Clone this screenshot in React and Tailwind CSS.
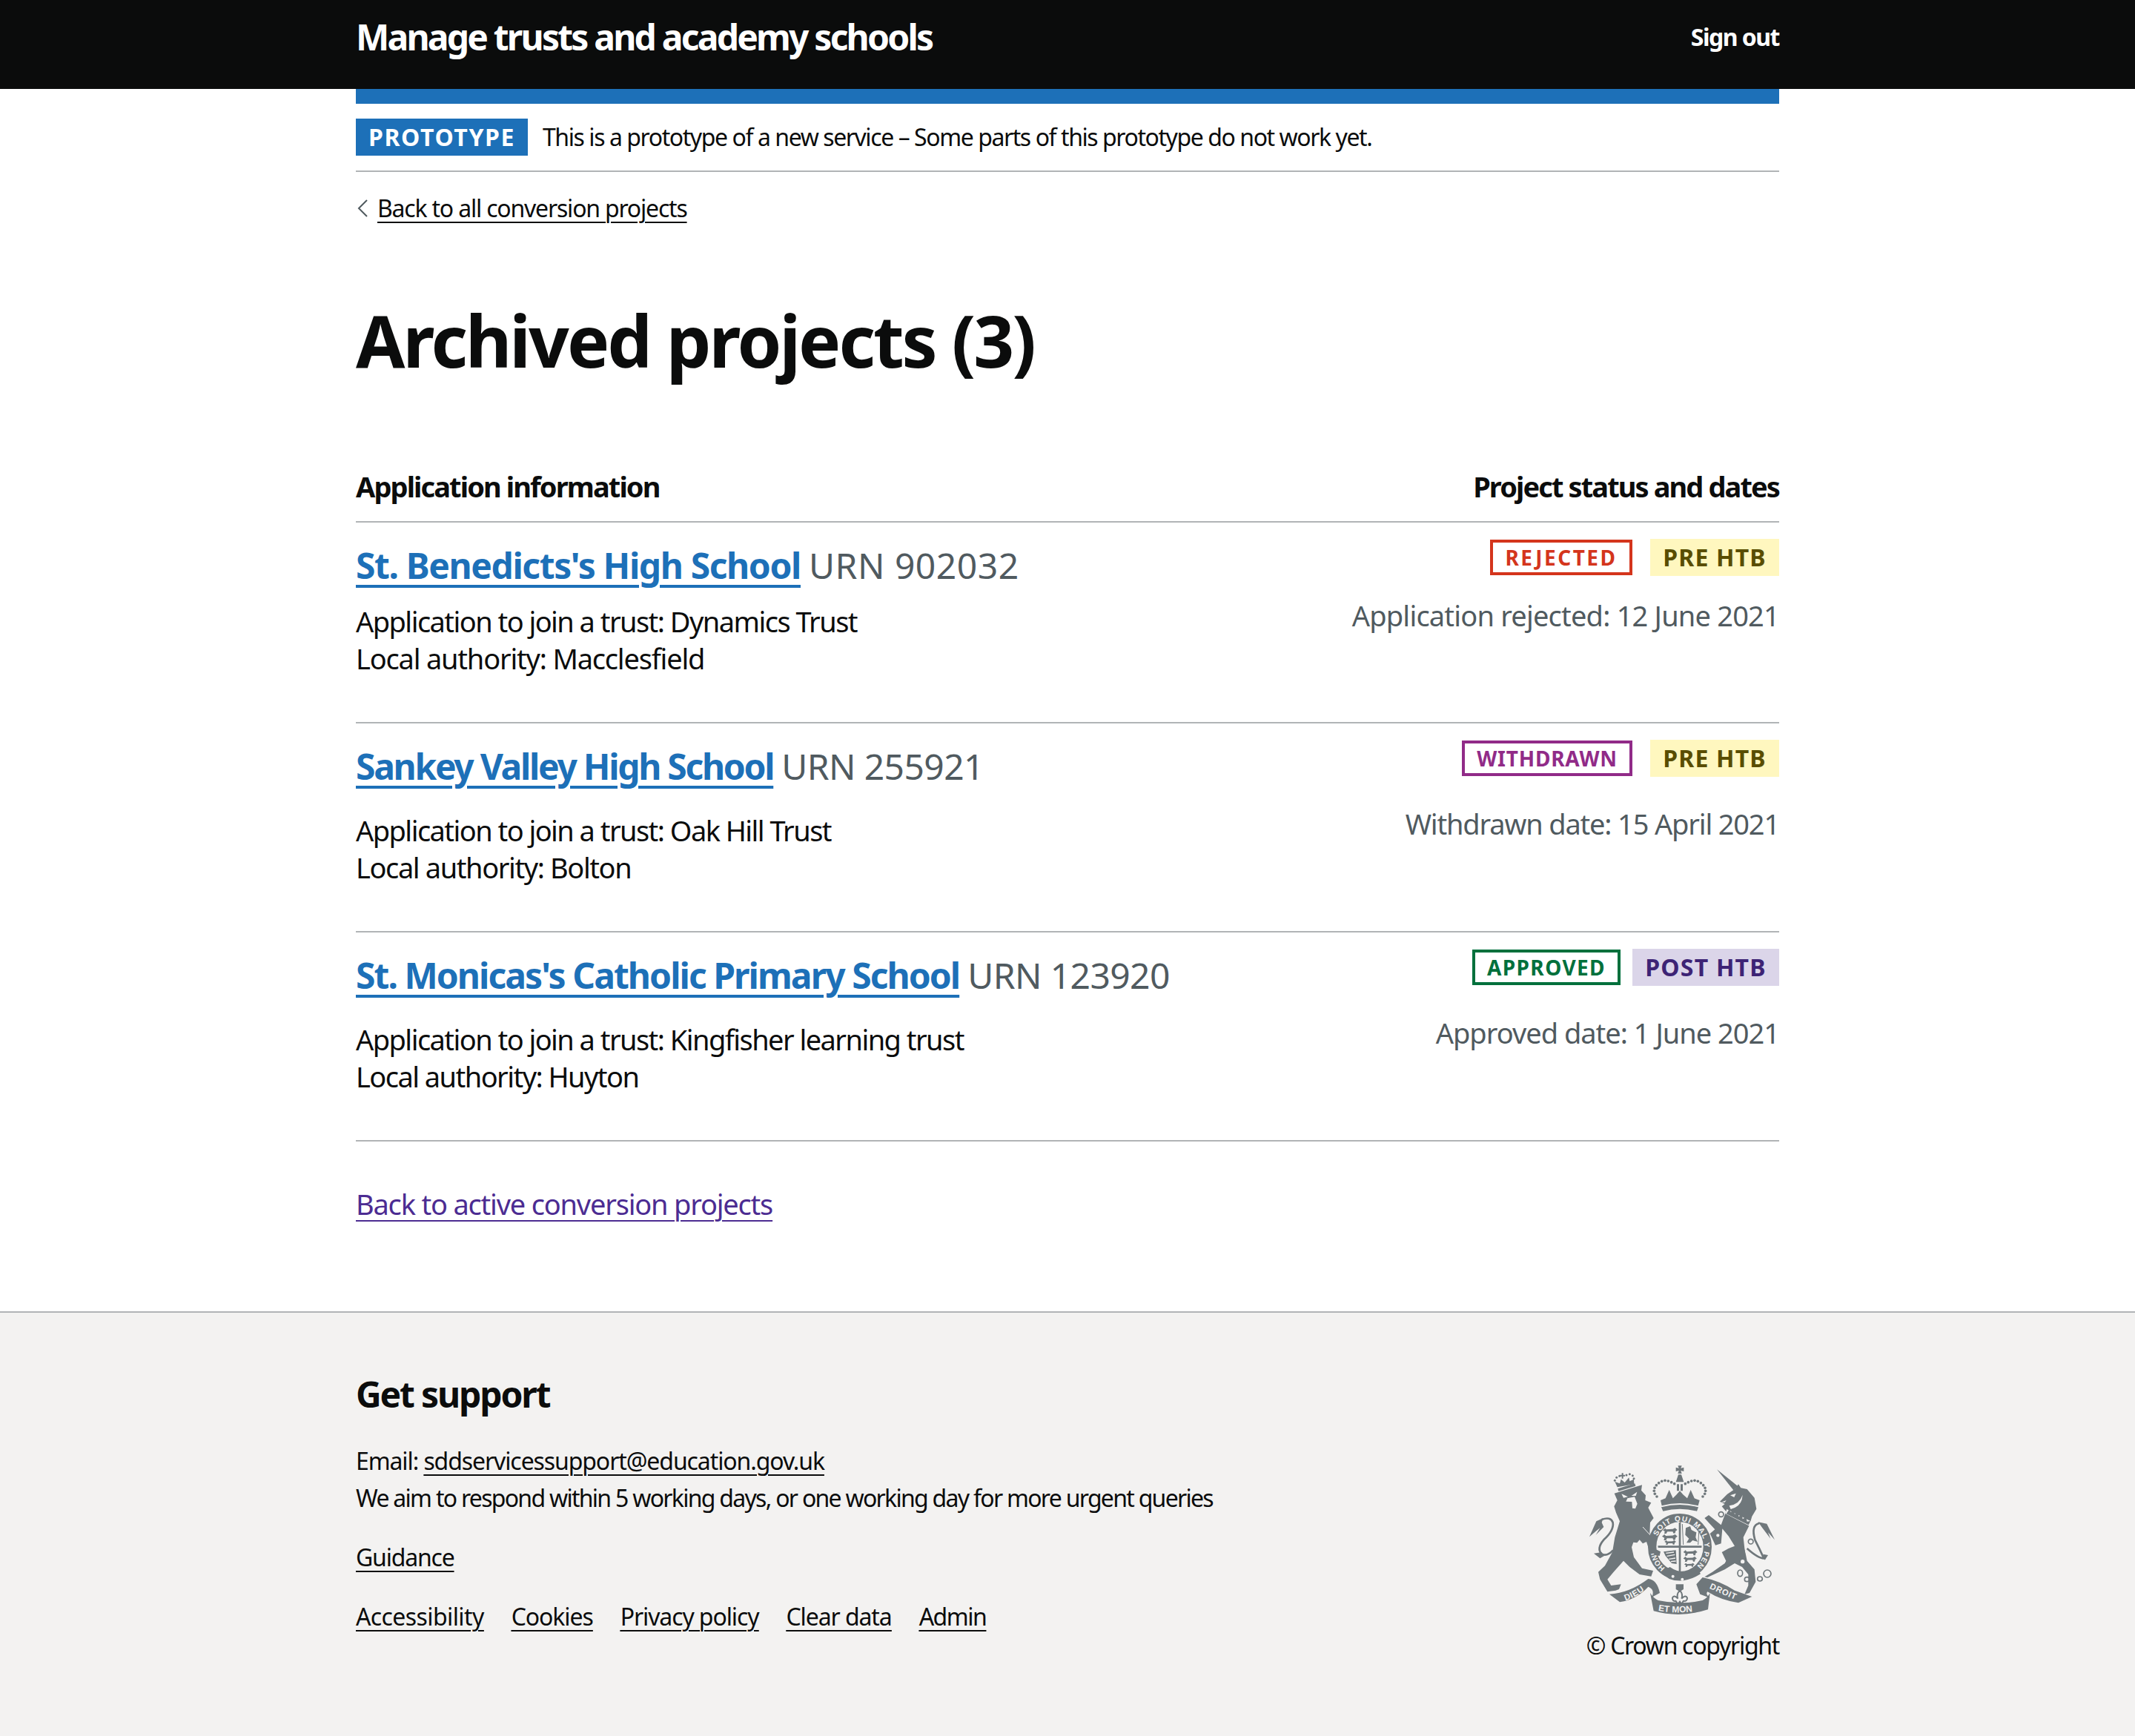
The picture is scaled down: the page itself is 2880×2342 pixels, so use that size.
import React from 'react';

const rows = [
  {
    name: "St. Benedicts's High School",
    nameClass: 'tracking-[-1.4px]',
    urn: 'URN 902032',
    urnClass: 'tracking-[0.5px]',
    trust: 'Dynamics Trust',
    authority: 'Macclesfield',
    authorityClass: 'tracking-[-1.2px]',
    status: 'REJECTED',
    statusClass: 'w-[192px] border-[#d4351c] tracking-[2.5px] text-[#d4351c]',
    phase: 'PRE HTB',
    phaseClass: 'ml-[24px] w-[174px] bg-[#fff7bf] text-[#594d00]',
    date: 'Application rejected: 12 June 2021',
    rowClass: 'h-[271px]',
    infoClass: 'mt-[20px]',
    dateClass: 'mt-[28px] tracking-[-0.8px]',
  },
  {
    name: 'Sankey Valley High School',
    nameClass: 'tracking-[-2.3px]',
    urn: 'URN 255921',
    urnClass: 'tracking-[-0.6px]',
    trust: 'Oak Hill Trust',
    authority: 'Bolton',
    authorityClass: 'tracking-[-1.4px]',
    status: 'WITHDRAWN',
    statusClass: 'w-[230px] border-[#912b88] tracking-[0.8px] text-[#912b88]',
    phase: 'PRE HTB',
    phaseClass: 'ml-[24px] w-[174px] bg-[#fff7bf] text-[#594d00]',
    date: 'Withdrawn date: 15 April 2021',
    rowClass: 'h-[282px]',
    infoClass: 'mt-[31px]',
    dateClass: 'mt-[38px] tracking-[-1.17px]',
  },
  {
    name: "St. Monicas's Catholic Primary School",
    nameClass: 'tracking-[-1.95px]',
    urn: 'URN 123920',
    urnClass: 'tracking-[-0.6px]',
    trust: 'Kingfisher learning trust',
    authority: 'Huyton',
    authorityClass: 'tracking-[-1.55px]',
    status: 'APPROVED',
    statusClass: 'w-[200px] border-[#00703c] tracking-[1.4px] text-[#00703c]',
    phase: 'POST HTB',
    phaseClass: 'ml-[16px] w-[198px] bg-[#dbd5e9] text-[#3d2375]',
    date: 'Approved date: 1 June 2021',
    rowClass: 'h-[282px]',
    infoClass: 'mt-[31px]',
    dateClass: 'mt-[38px] tracking-[-1px]',
  },
];

const paper = '#f3f2f1';
const ink = '#6f777b';
const heraldicLion = 'M0 7L8 0L13 5L36 4L44 0L52 7L46 11L44 19L38 19L36 13L17 13L13 20L6 20L8 12Z';
const crownBeads = [[285, 135], [277, 124], [274, 112], [276, 100], [283, 89], [293, 80], [305, 73], [318, 70], [331, 72], [344, 77], [356, 83], [400, 83], [412, 77], [425, 72], [438, 70], [451, 73], [463, 80], [473, 89], [480, 100], [482, 112], [479, 124], [471, 135]];

const Crest = () => (
  <svg viewBox="0 0 765 630" className="mr-[5px] block h-[210px] w-[255px]" fill={ink}>
    {/* lion */}
    <path d="M108 352Q85 378 62 368Q40 345 70 310Q112 272 107 240Q98 215 62 228" fill="none" stroke={ink} strokeWidth="8" />
    <path d="M68 222L40 235L12 298L38 275L55 262L38 290L70 258L62 240Z" />
    <path d="M30 365L62 360L72 375L55 385Z" />
    <path d="M113 122L225 88L222 110L240 130L238 150L262 160L250 180L272 222L258 240L256 285L278 340L300 358L296 375L278 372L262 355L250 340L243 318L228 325L215 310L205 322L190 320L183 340L192 380L225 425L270 435L262 458L215 450L175 420L150 395L110 440L85 470L100 495L140 490L132 510L118 515L85 520L55 470L48 440L75 415L105 360L115 300L135 235L120 200L112 175L125 150Z" />
    <path d="M228 258L262 295" stroke={paper} strokeWidth="3" fill="none" />
    <path d="M142 124L168 136L150 140ZM205 116L182 132L200 132ZM166 142L195 136L206 164L198 184L186 182L184 156L160 155Z" fill={paper} />
    {/* lion crown */}
    <path d="M125 97L115 75L135 82L140 65L155 78L172 58L175 73L192 65L193 85Z" />
    <path d="M127 103L196 82L199 92L130 113Z" />
    <path d="M143 40H149V47H156V53H149V62H143V53H136V47H143Z" />
    {[[115, 70], [122, 58], [134, 52], [162, 48], [175, 44], [187, 50], [192, 62]].map(([x, y]) => (
      <circle key={`${x}-${y}`} cx={x} cy={y} r="4.5" />
    ))}

    {/* main crown */}
    <path d="M370 10H386L382 20L394 17V33L382 30L386 42H370L374 30L362 33V17L374 20Z" />
    <path d="M372 46H384L394 76H362Z" />
    <path d="M366 85H375V112H366ZM381 85H390V112H381Z" />
    {crownBeads.map(([x, y]) => (
      <circle key={`${x}-${y}`} cx={x} cy={y} r="5.5" />
    ))}
    <path d="M300 150L320 142L335 108L350 142L365 127L378 112L391 127L408 142L422 108L437 142L458 150L452 172Q378 152 305 172Z" />
    <path d="M303 178Q378 158 453 178L447 194Q378 176 310 194Z" />

    {/* garter and shield */}
    <ellipse cx="378" cy="338" rx="112" ry="117" fill={paper} stroke={ink} strokeWidth="34" />
    <clipPath id="shieldClip">
      <path d="M290 290Q330 245 378 236Q426 245 466 290Q472 350 452 395Q420 440 378 452Q336 440 304 395Q284 350 290 290Z" />
    </clipPath>
    <g clipPath="url(#shieldClip)">
      <path transform="translate(308 262) scale(1.15)" d={heraldicLion} />
      <path transform="translate(306 288) scale(1.2)" d={heraldicLion} />
      <path transform="translate(316 312) scale(.9)" d={heraldicLion} />
      <path transform="translate(392 352) scale(1.1)" d={heraldicLion} />
      <path transform="translate(392 378) scale(1.05)" d={heraldicLion} />
      <path transform="translate(396 404) scale(.8)" d={heraldicLion} />
      <path d="M402 262L420 255L425 270L445 280L442 300L450 318L430 312L420 322L405 322L415 305L400 290Z" />
      <path d="M388 246L392 330M456 262L452 330" stroke={ink} strokeWidth="3" fill="none" />
      <path d="M312 358L362 352L365 408L345 405L320 375Z" />
      <path d="M322 364L354 360M326 376L358 370M334 388L360 384M342 398L362 396" stroke={paper} strokeWidth="4" fill="none" />
      <path d="M374 230H382V455H374ZM285 334H475V342H285Z" />
    </g>
    <path id="garterTop" d="M287 296A100 105 0 1 1 440 422" fill="none" />
    <path id="garterLeft" d="M318 424A100 105 0 0 1 281 362" fill="none" />
    <text fontFamily="'Liberation Sans',sans-serif" fontSize="30" fontWeight="700" letterSpacing="3.5" fill={paper}>
      <textPath href="#garterTop">SOIT QUI MAL Y PENSE</textPath>
    </text>
    <text fontFamily="'Liberation Sans',sans-serif" fontSize="30" fontWeight="700" fill={paper}>
      <textPath href="#garterLeft">HONI</textPath>
    </text>
    <path d="M262 345L285 350L300 358L296 375L278 372L262 355Z" />

    {/* buckle */}
    <path d="M322 428L338 420Q380 452 452 432L462 448Q395 490 335 468L316 452Z" />
    <circle cx="350" cy="458" r="6" fill={paper} />
    <circle cx="388" cy="470" r="6" fill={paper} />

    {/* ribbon */}
    <path d="M93 530Q175 525 250 468Q285 470 297 525L265 542Q278 510 250 500Q205 550 135 562Z" />
    <path d="M445 490L470 462Q540 476 600 515L670 540L615 565Q545 555 490 520Q480 530 500 545L460 530Z" />
    <path d="M258 525Q270 545 290 555Q380 575 470 555Q490 545 500 525L492 592Q380 628 272 598Z" />
    <path d="M362 490H393V510L378 520L362 510Z" />
    <path d="M378 515Q392 530 385 548Q402 530 408 545Q408 560 392 558L385 570L378 560L370 570L362 558Q348 560 348 545Q354 530 370 548Q363 530 378 515Z" fill="none" stroke={ink} strokeWidth="6" />
    <path id="ribbonLeft" d="M158 556Q210 538 258 496" fill="none" />
    <path id="ribbonRight" d="M497 506Q550 530 612 557" fill="none" />
    <path id="ribbonMid" d="M290 597Q378 612 468 594" fill="none" />
    <g fontFamily="'Liberation Sans',sans-serif" fontWeight="700" fill={paper}>
      <text fontSize="34" letterSpacing="2"><textPath href="#ribbonLeft">DIEU</textPath></text>
      <text fontSize="34" letterSpacing="2"><textPath href="#ribbonRight">DROIT</textPath></text>
      <text fontSize="36"><textPath href="#ribbonMid">ET MON</textPath></text>
    </g>

    {/* unicorn */}
    <path d="M528 25L596 110L612 92Z" />
    <path d="M540 155L570 125L600 105L615 85L625 100L650 105L680 140L688 185L670 215L660 250L635 300L640 345L650 395L680 430L685 480L660 525L640 530L655 495L655 450L630 420L600 405L560 430L490 462L478 460L510 440L560 405L565 395L548 360L575 345L600 335L575 295L550 265L545 325L522 332L500 285L520 268L478 222L495 210L545 250L565 195L548 175L560 165Z" />
    <path d="M568 186L668 236L660 254L562 204Z" fill={paper} />
    <path d="M572 196L578 186L584 198L596 190L600 206L614 198L616 216L630 208L632 226L646 218L650 236L664 234L656 250L566 205Z" />
    <path d="M582 130L605 122L598 138Z" fill={paper} />
    <path d="M578 172Q620 165 632 128Q630 175 584 186Z" fill={paper} />
    <path d="M545 158L566 150L560 158Z" fill={paper} />
    <circle cx="545" cy="207" r="10" fill="none" stroke={ink} strokeWidth="5" />
    <circle cx="532" cy="292" r="9" fill={paper} stroke={ink} strokeWidth="5" />
    <circle cx="665" cy="317" r="10" fill="none" stroke={ink} strokeWidth="5" />
    <circle cx="650" cy="358" r="7" fill={paper} />
    <circle cx="632" cy="398" r="8" fill={paper} />
    <ellipse cx="622" cy="445" rx="10" ry="13" fill="none" stroke={ink} strokeWidth="5" />
    <ellipse cx="650" cy="470" rx="10" ry="9" fill="none" stroke={ink} strokeWidth="5" />
    <ellipse cx="702" cy="468" rx="10" ry="9" fill="none" stroke={ink} strokeWidth="5" />
    <circle cx="732" cy="447" r="15" fill="none" stroke={ink} strokeWidth="5" />
    <path d="M650 345Q695 385 718 385Q700 345 682 310Q665 250 700 243" fill="none" stroke={ink} strokeWidth="8" />
    <path d="M695 238L730 245L762 310L735 280L745 305L712 262Z" />
    <path d="M715 368L735 372L722 392Z" />
  </svg>
);

const App = () => {
  return (
    <div className="flex min-h-[2342px] flex-col bg-white font-['Noto_Sans',sans-serif] text-[#0b0c0c]">
      <header className="h-[120px] bg-[#0b0c0c] text-white">
        <div className="mx-auto flex h-[100px] w-[1920px] items-center justify-between">
          <span className="text-[48px] font-bold tracking-[-2.8px]">Manage trusts and academy schools</span>
          <span className="text-[32px] font-bold tracking-[-1.5px]">Sign out</span>
        </div>
      </header>

      <main className="mx-auto w-[1920px]">
        <div className="h-[20px] bg-[#1d70b8]"></div>
        <div className="flex items-center border-b-2 border-[#b1b4b6] py-[20px]">
          <span className="flex h-[50px] w-[232px] items-center justify-center bg-[#1d70b8] text-[32px] font-bold tracking-[1.6px] text-white">PROTOTYPE</span>
          <span className="ml-[20px] text-[32px] tracking-[-1.43px]">This is a prototype of a new service – Some parts of this prototype do not work yet.</span>
        </div>

        <div className="mt-[27px] flex h-[44px] items-center">
          <svg viewBox="0 0 14 24" className="ml-[2px] h-[24px] w-[14px]" fill="none" stroke="#505a5f" strokeWidth="2">
            <path d="M13 1L2 12L13 23" />
          </svg>
          <a className="ml-[13px] text-[32px] tracking-[-1.2px] underline underline-offset-[6px] decoration-2">Back to all conversion projects</a>
        </div>

        <h1 className="mt-[96px] text-[96px] leading-[120px] font-bold tracking-[-3px]">Archived projects (3)</h1>

        <div className="mt-[112px] flex h-[74px] items-start justify-between border-b-2 border-[#b1b4b6] text-[38px] leading-[50px] font-bold tracking-[-1.9px]">
          <span>Application information</span>
          <span>Project status and dates</span>
        </div>

        {rows.map((row) => (
          <div key={row.urn} className={`flex justify-between border-b-2 border-[#b1b4b6] ${row.rowClass}`}>
            <div className="pt-[28px]">
              <div className="text-[48px] leading-[60px]">
                <a className={`font-bold text-[#1d70b8] underline underline-offset-[8px] decoration-[4px] ${row.nameClass}`}>{row.name}</a>
                <span className={`ml-[11px] text-[#505a5f] ${row.urnClass}`}>{row.urn}</span>
              </div>
              <p className={`text-[38px] leading-[50px] tracking-[-1.55px] ${row.infoClass}`}>Application to join a trust: {row.trust}</p>
              <p className={`text-[38px] leading-[50px] ${row.authorityClass}`}>Local authority: {row.authority}</p>
            </div>
            <div className="flex flex-col items-end pt-[22px]">
              <div className="flex items-center">
                <span className={`flex h-[48px] items-center justify-center border-4 text-[28px] font-bold ${row.statusClass}`}>{row.status}</span>
                <span className={`flex h-[50px] items-center justify-center text-[32px] font-bold tracking-[1.2px] ${row.phaseClass}`}>{row.phase}</span>
              </div>
              <p className={`text-[38px] leading-[50px] text-[#505a5f] ${row.dateClass}`}>{row.date}</p>
            </div>
          </div>
        ))}

        <a className="mt-[59px] mb-[120px] block text-[38px] leading-[50px] tracking-[-1.2px] text-[#4c2c92] underline underline-offset-[7px] decoration-2">Back to active conversion projects</a>
      </main>

      <footer className="flex-1 border-t-2 border-[#b1b4b6] bg-[#f3f2f1]">
        <div className="mx-auto flex w-[1920px] justify-between">
          <div className="pt-[80px]">
            <h2 className="text-[48px] leading-[60px] font-bold tracking-[-2.15px]">Get support</h2>
            <p className="mt-[35px] text-[32px] leading-[50px] tracking-[-1.1px]">
              Email: <a className="underline underline-offset-[6px] decoration-2">sddservicessupport@education.gov.uk</a>
            </p>
            <p className="text-[32px] leading-[50px] tracking-[-1.72px]">We aim to respond within 5 working days, or one working day for more urgent queries</p>
            <a className="mt-[30px] block text-[32px] leading-[50px] tracking-[-1.2px] underline underline-offset-[6px] decoration-2">Guidance</a>
            <div className="mt-[30px] flex gap-[37px] text-[32px] leading-[50px] tracking-[-1.1px] underline underline-offset-[6px] decoration-2">
              <a className="tracking-[-0.6px]">Accessibility</a>
              <a>Cookies</a>
              <a>Privacy policy</a>
              <a>Clear data</a>
              <a className="tracking-[-1.5px]">Admin</a>
            </div>
          </div>
          <div className="flex flex-col items-end pt-[203px]">
            <Crest />
            <span className="mt-[11px] text-[32px] leading-[50px] tracking-[-1.3px]">© Crown copyright</span>
          </div>
        </div>
      </footer>
    </div>
  );
};

export default App;
